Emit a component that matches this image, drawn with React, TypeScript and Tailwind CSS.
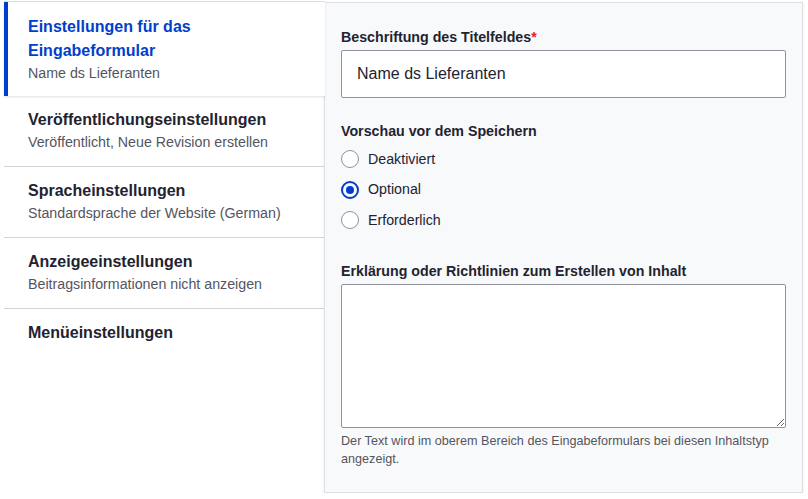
import React from "react";

const tabs = [
  { title: "Veröffentlichungseinstellungen", desc: "Veröffentlicht, Neue Revision erstellen" },
  { title: "Spracheinstellungen", desc: "Standardsprache der Website (German)" },
  { title: "Anzeigeeinstellungen", desc: "Beitragsinformationen nicht anzeigen" },
  { title: "Menüeinstellungen", desc: "" },
];

const radios = ["Deaktiviert", "Optional", "Erforderlich"];

function Radio({ label, checked }: { label: string; checked?: boolean }) {
  return (
    <label className="flex h-[30.5px] items-center gap-[9px] text-[14.22px] text-[#222330]">
      {checked ? (
        <span className="flex h-[18px] w-[18px] items-center justify-center rounded-full border-2 border-[#003ecc] bg-white">
          <span className="h-[8px] w-[8px] rounded-full bg-[#003ecc]" />
        </span>
      ) : (
        <span className="h-[18px] w-[18px] rounded-full border border-[#8e929c] bg-white" />
      )}
      {label}
    </label>
  );
}

export default function App() {
  return (
    <div
      className="flex items-start bg-white pt-[2px] pr-[5px] pl-[4px] text-[#222330]"
      style={{ fontFamily: '"Liberation Sans", Arial, sans-serif' }}
    >
      {/* vertical tab menu */}
      <ul className="w-[320px] shrink-0">
        <li className="relative z-10 -mr-px border-l-4 border-[#003ecc] bg-white pt-[13px] pr-6 pb-[12px] pl-5 shadow-[0_1px_2px_rgba(0,0,0,0.12),0_-1px_0_#dedfe4]">
          <div className="text-[16px] leading-[24px] font-bold text-[#003ecc]">
            Einstellungen für das
            <br />
            Eingabeformular
          </div>
          <div className="text-[14.22px] leading-[21px] text-[#545560]">Name ds Lieferanten</div>
        </li>
        {tabs.map((t, i) => (
          <li
            key={t.title}
            className={
              i < tabs.length - 1
                ? "border-b border-[#d3d4d9] px-6 pt-[12px] pb-[13px]"
                : "px-6 pt-[12px] pb-[13px]"
            }
          >
            <div className="text-[16px] leading-[24px] font-bold">{t.title}</div>
            {t.desc && <div className="text-[14.22px] leading-[21px] text-[#545560]">{t.desc}</div>}
          </li>
        ))}
      </ul>

      {/* panel */}
      <div className="flex-1 border border-[#dedfe4] bg-[#f8f9fb] px-4 pt-[25px] pb-[24px] shadow-[0_1px_3px_rgba(0,0,0,0.08)]">
        <div className="text-[14.22px] leading-[18px] font-bold">
          Beschriftung des Titelfeldes<span className="text-[#dc2323]">*</span>
        </div>
        <div className="mt-1 flex h-[48px] items-center rounded-[2px] border border-[#8e929c] bg-white px-[15px] text-[16px]">
          Name ds Lieferanten
        </div>

        <div className="mt-6 text-[14.22px] leading-[18px] font-bold">Vorschau vor dem Speichern</div>
        <div className="mt-[4px] flex flex-col">
          {radios.map((r) => (
            <Radio key={r} label={r} checked={r === "Optional"} />
          ))}
        </div>

        <div className="mt-[26px] text-[14.22px] leading-[18px] font-bold">
          Erklärung oder Richtlinien zum Erstellen von Inhalt
        </div>
        <textarea className="mt-1 block h-[144px] w-full rounded-[2px] border border-[#8e929c] bg-white" />
        <p className="mt-1 text-[12.64px] leading-[18px] text-[#545560]">
          Der Text wird im oberem Bereich des Eingabeformulars bei diesen Inhaltstyp angezeigt.
        </p>
      </div>
    </div>
  );
}
